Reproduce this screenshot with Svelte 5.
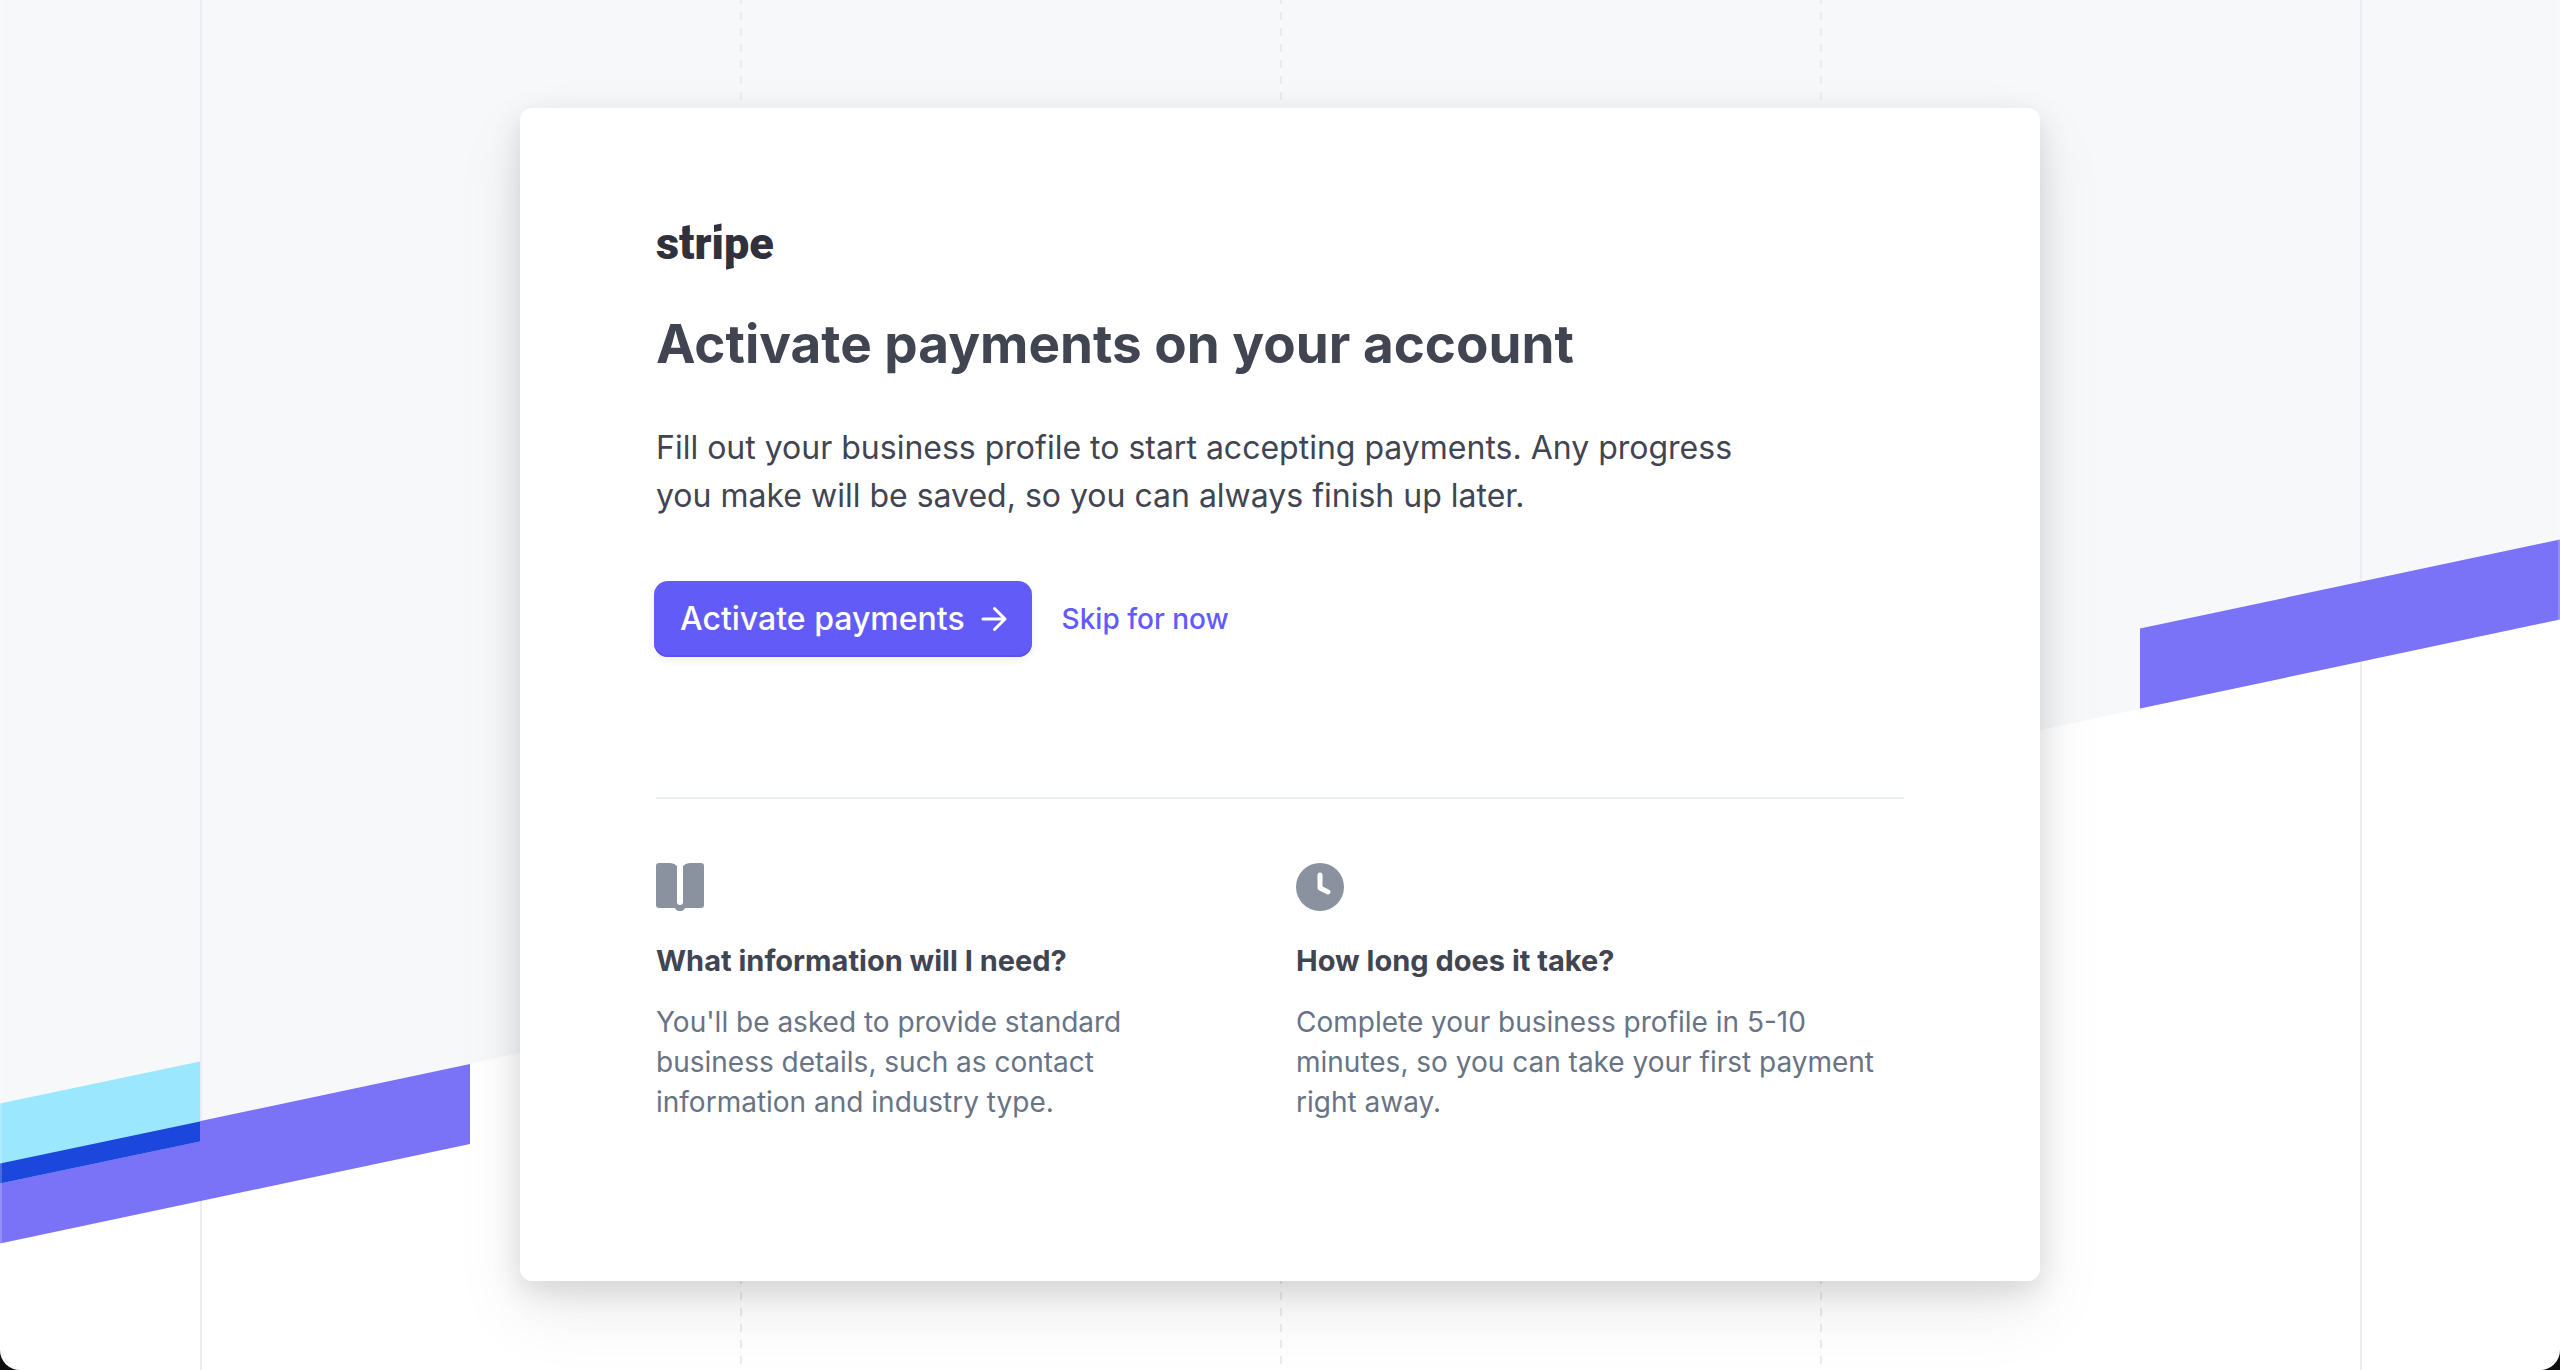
<script>
  const guides = ['solid', 'dashed', 'dashed', 'dashed', 'solid'];

  const topics = [
    {
      icon: 'book',
      title: 'What information will I need?',
      text: "You'll be asked to provide standard business details, such as contact information and industry type."
    },
    {
      icon: 'clock',
      title: 'How long does it take?',
      text: 'Complete your business profile in 5-10 minutes, so you can take your first payment right away.'
    }
  ];
</script>

<div class="page">
  <div class="backdrop" aria-hidden="true">
    <svg class="stripes" viewBox="0 0 2560 1370" preserveAspectRatio="none">
      <polygon points="0,0 2560,0 2560,619.500 0,1163.500" fill="#f6f8fa" />
    </svg>
    <div class="guides">
      {#each guides as kind}
        <span class="guide {kind}"></span>
      {/each}
    </div>
    <svg class="stripes" viewBox="0 0 2560 1370" preserveAspectRatio="none">
      <polygon points="0,1163.500 470,1064 470,1144 0,1243.500" fill="#7a73f8" />
      <polygon points="0,1103.500 200,1061.500 200,1141.500 0,1183.500" fill="#9ae7fe" />
      <polygon points="0,1163.500 200,1121.500 200,1141.500 0,1183.500" fill="#1b47dd" />
      <polygon points="2140,708.500 2140,628.500 2560,539.500 2560,619.500" fill="#7a73f8" />
    </svg>
    <div class="edges"></div>
  </div>

  <main class="card">
    <svg class="logo" viewBox="0 0 120 56" role="img" aria-label="stripe">
      <text x="0" y="43">stripe</text>
      <rect x="56" y="8" width="11" height="10" fill="#fff" />
      <path d="M58 9L65.500 7.400V14.400L58 16ZM26.400 10.500L33.800 9V15H26.400ZM70.100 50H77.500V52.100L70.100 53.700Z" />
    </svg>
    <h1>Activate payments on your account</h1>
    <p class="lead">
      Fill out your business profile to start accepting payments. Any progress you make will be saved, so you can always finish up later.
    </p>
    <div class="actions">
      <button class="primary" type="button">
        Activate payments
        <svg viewBox="0 0 26 26" aria-hidden="true">
          <path d="M2 13H24M13.500 2.500L24 13L13.500 23.500" />
        </svg>
      </button>
      <a class="skip" href="#skip">Skip for now</a>
    </div>

    <section class="topics">
      {#each topics as topic}
        <article>
          {#if topic.icon === 'book'}
            <svg class="icon" viewBox="0 0 48 48" aria-hidden="true">
              <path d="M3 0H14Q18 0 21 3V39a3 3 0 0 0 6 0V3Q30 0 34 0H45a3 3 0 0 1 3 3V42a3 3 0 0 1-3 3H29a5.500 5.500 0 0 1-10 0H3a3 3 0 0 1-3-3V3a3 3 0 0 1 3-3Z" />
            </svg>
          {:else}
            <svg class="icon" viewBox="0 0 48 48" aria-hidden="true">
              <circle cx="24" cy="24" r="24" />
              <path class="hands" d="M24 12V25L32 29" />
            </svg>
          {/if}
          <h2>{topic.title}</h2>
          <p>{topic.text}</p>
        </article>
      {/each}
    </section>
  </main>
</div>

<style>
  :global(body) {
    background: #0f0f0f;
  }

  .page {
    position: relative;
    box-sizing: border-box;
    min-height: 100vh;
    padding: 108px 24px 88px;
    overflow: hidden;
    border-radius: 0 0 20px 20px;
    background: #fff;
    font-family: Inter, 'Liberation Sans', sans-serif;
    color: #414552;
  }

  .backdrop,
  .stripes,
  .edges {
    position: absolute;
    inset: 0;
    width: 100%;
    height: 100%;
  }

  .edges {
    box-sizing: border-box;
    border: solid rgba(255, 255, 255, 0.2);
    border-width: 0 2px;
  }

  .guides {
    position: relative;
    display: flex;
    justify-content: space-between;
    max-width: 2160px;
    height: 100%;
    margin: 0 auto;
  }

  .guide {
    width: 2px;
    margin-right: -2px;
  }

  .solid {
    background: #ebedf3;
  }

  .dashed {
    background: repeating-linear-gradient(#e9ebef 0 4px, transparent 4px 12px, #e9ebef 12px 16px);
  }

  .card {
    position: relative;
    box-sizing: border-box;
    max-width: 1520px;
    margin: 0 auto;
    padding: 108px 136px 159px;
    border-radius: 12px;
    background: #fff;
    box-shadow: 0 30px 70px rgba(0, 0, 0, 0.08), 0 10px 30px rgba(0, 0, 0, 0.12);
  }

  .logo {
    display: block;
    width: 120px;
    height: 56px;
    overflow: visible;
    fill: #30313d;
  }

  .logo text {
    font: 900 45px Roboto, 'Liberation Sans', sans-serif;
  }

  h1 {
    margin: 36px 0 0;
    font-size: 53px;
    line-height: 72px;
    font-weight: 700;
  }

  .lead {
    max-width: 1120px;
    margin: 44px 0 0;
    font-size: 32px;
    line-height: 48px;
  }

  .actions {
    display: flex;
    align-items: center;
    gap: 30px;
    margin: 61px 0 0 -2px;
  }

  .primary {
    display: flex;
    align-items: center;
    gap: 16px;
    height: 76px;
    padding: 0 25px 0 26px;
    border: 0;
    border-radius: 14px;
    background: #635bf7;
    box-shadow: inset 0 -2px 0 #5a52ea, 0 4px 8px rgba(0, 0, 0, 0.06);
    color: #fff;
    font: 500 32px/48px Inter, 'Liberation Sans', sans-serif;
  }

  .primary svg {
    width: 26px;
    height: 26px;
    fill: none;
    stroke: currentColor;
    stroke-width: 3;
    stroke-linecap: round;
    stroke-linejoin: round;
  }

  .skip {
    color: #625afa;
    font-size: 28px;
    line-height: 40px;
    font-weight: 500;
    text-decoration: none;
  }

  .topics {
    display: grid;
    grid-template-columns: 1fr 1fr;
    gap: 56px;
    margin-top: 140px;
    padding: 64px 24px 0 0;
    border-top: 2px solid #ebeef1;
  }

  .icon {
    display: block;
    width: 48px;
    height: 48px;
    fill: #8a919f;
  }

  .hands {
    fill: none;
    stroke: #fff;
    stroke-width: 5;
    stroke-linecap: round;
    stroke-linejoin: round;
  }

  h2 {
    margin: 30px 0 0;
    font-size: 29px;
    line-height: 40px;
    font-weight: 700;
  }

  article p {
    margin: 21px 0 0;
    color: #687385;
    font-size: 28px;
    line-height: 40px;
  }
</style>
